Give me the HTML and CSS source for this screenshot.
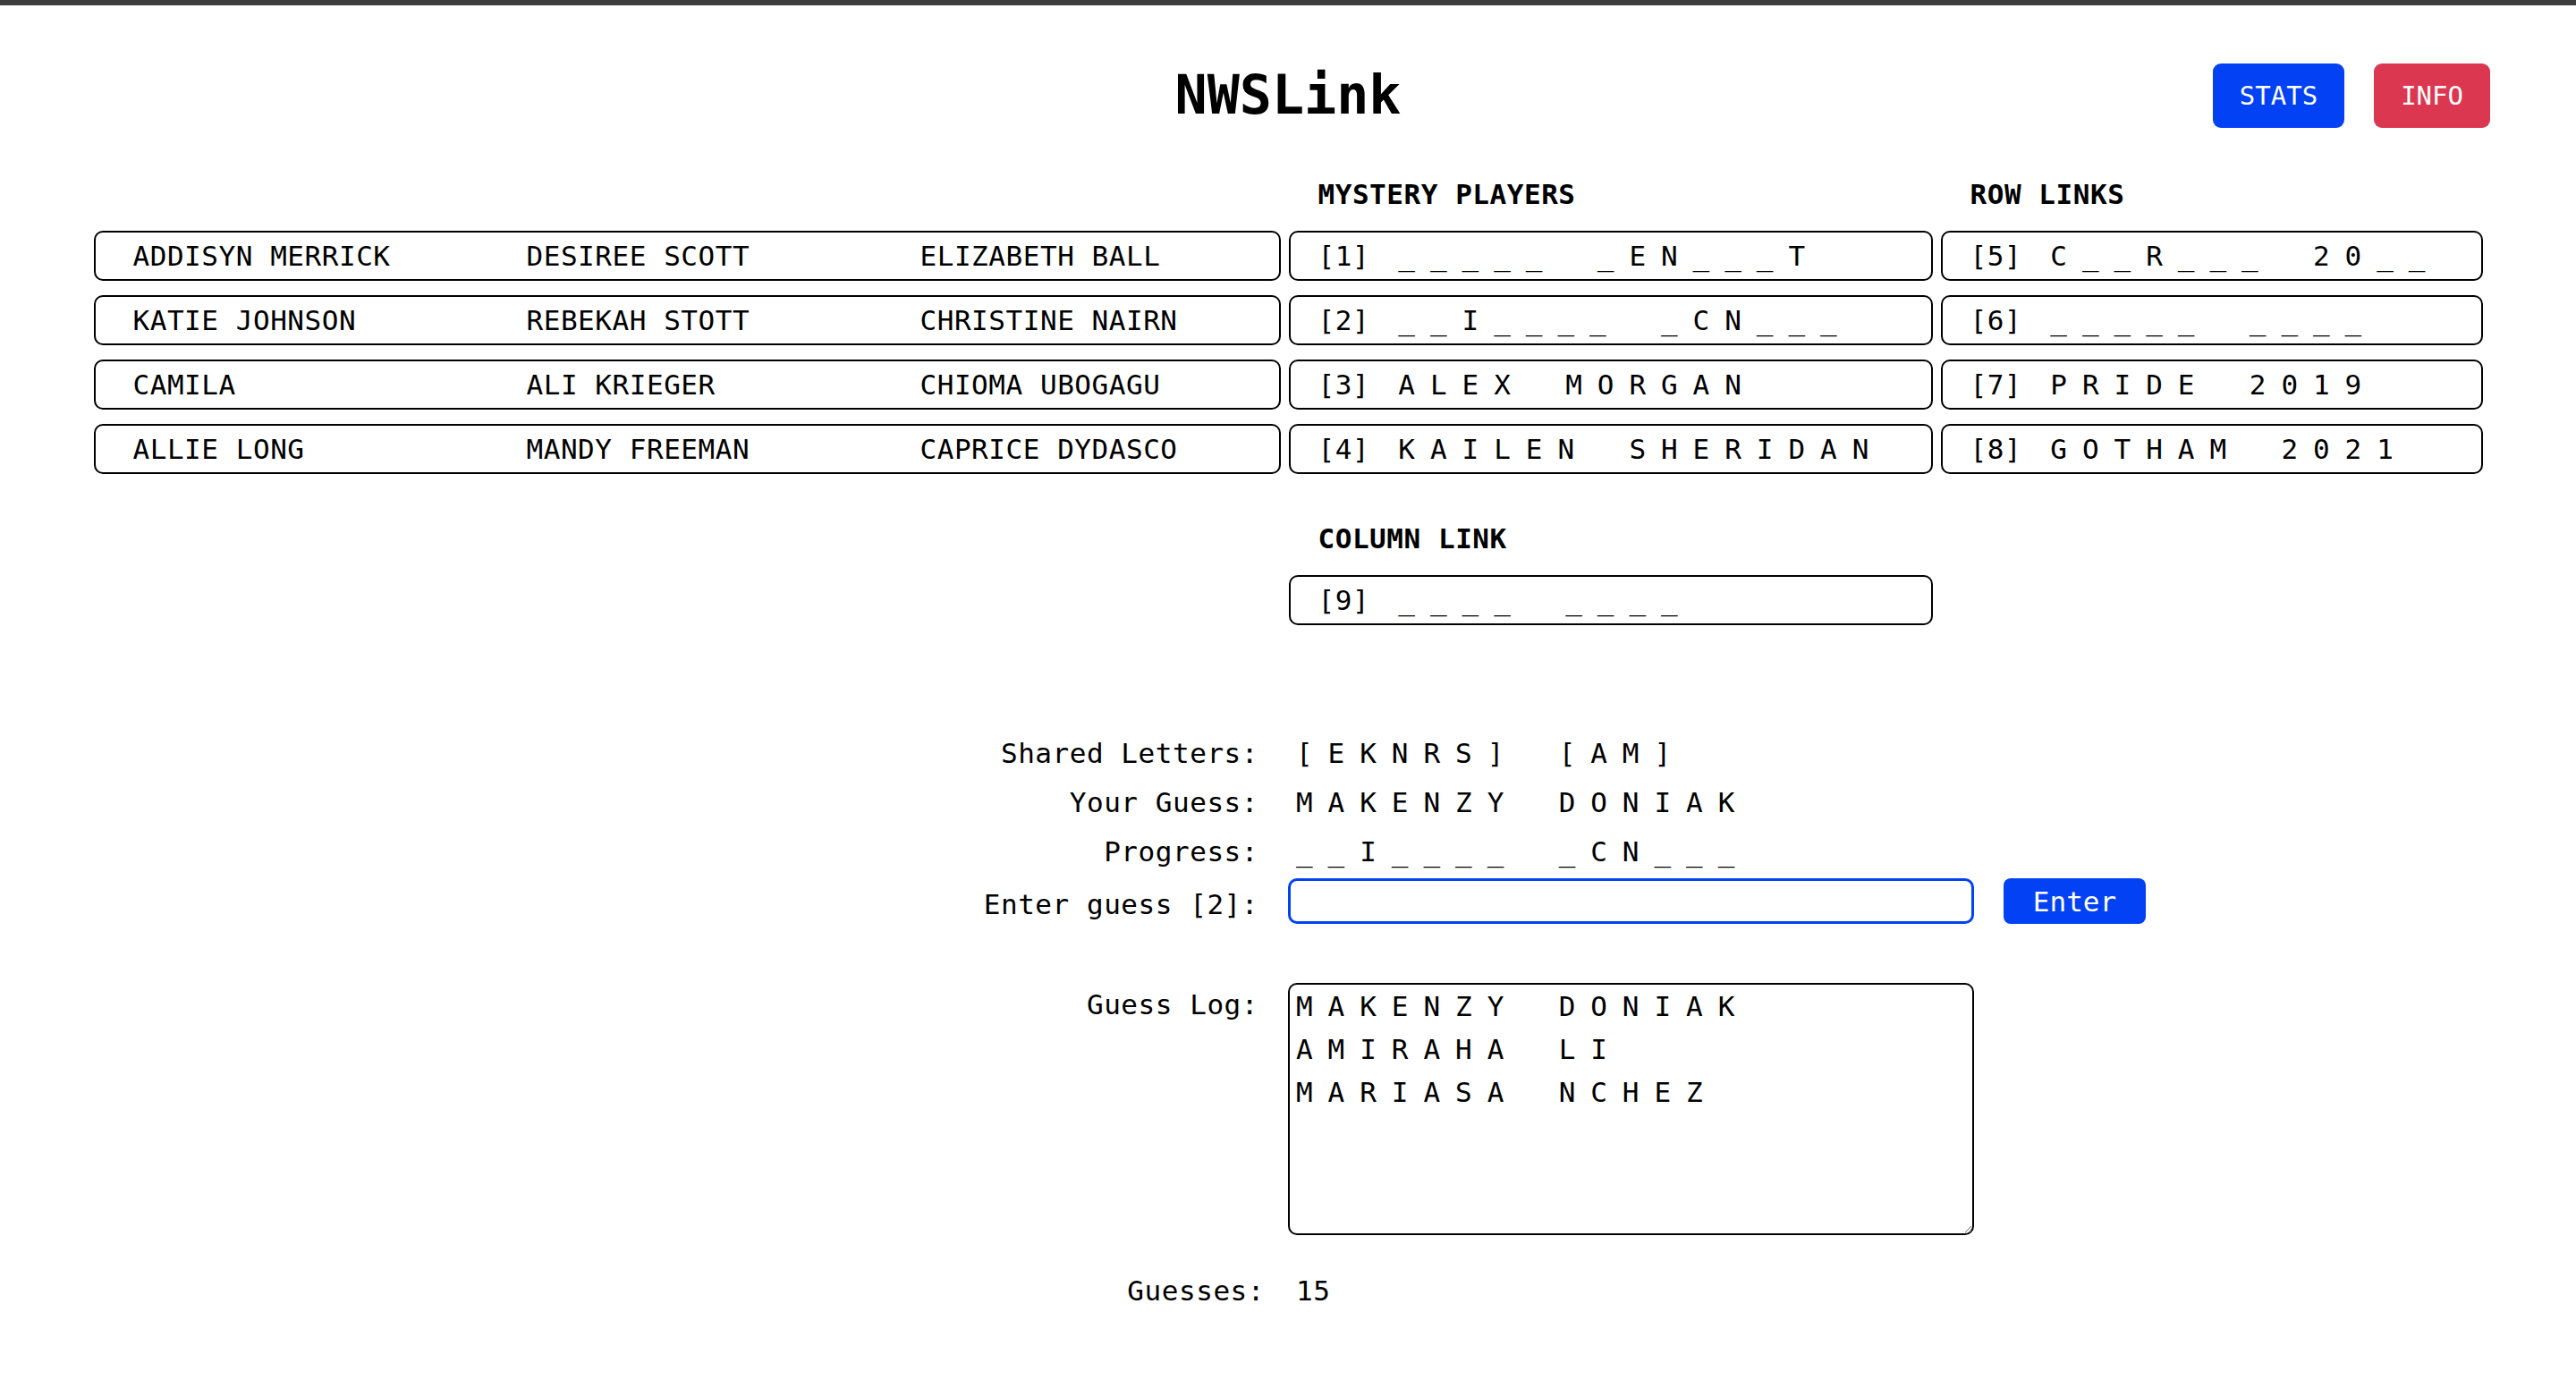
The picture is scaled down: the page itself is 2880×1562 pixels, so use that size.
FILE: index.html
```html
<!DOCTYPE html>
<html lang="en">
<head>
<meta charset="utf-8">
<title>NWSLink</title>
<link rel="stylesheet" href="styles.css">
</head>
<body>
<div class="topbar"></div>
<header class="header">
  <h1 class="title">NWSLink</h1>
  <nav class="actions">
    <button class="btn btn-top btn-stats">STATS</button>
    <button class="btn btn-top btn-info">INFO</button>
  </nav>
</header>
<main>
  <section class="board">
    <div class="col">
      <div class="heading"></div>
      <div class="box names"><span>ADDISYN MERRICK</span><span>DESIREE SCOTT</span><span>ELIZABETH BALL</span></div>
      <div class="box names"><span>KATIE JOHNSON</span><span>REBEKAH STOTT</span><span>CHRISTINE NAIRN</span></div>
      <div class="box names"><span>CAMILA</span><span>ALI KRIEGER</span><span>CHIOMA UBOGAGU</span></div>
      <div class="box names"><span>ALLIE LONG</span><span>MANDY FREEMAN</span><span>CAPRICE DYDASCO</span></div>
    </div>
    <div class="col">
      <h2 class="heading">MYSTERY PLAYERS</h2>
      <div class="box clue"><span class="num">[1]</span> <span class="sp">_ _ _ _ _   _ E N _ _ _ T</span></div>
      <div class="box clue"><span class="num">[2]</span> <span class="sp">_ _ I _ _ _ _   _ C N _ _ _</span></div>
      <div class="box clue"><span class="num">[3]</span> <span class="sp">A L E X   M O R G A N</span></div>
      <div class="box clue"><span class="num">[4]</span> <span class="sp">K A I L E N   S H E R I D A N</span></div>
      <h2 class="heading heading-col">COLUMN LINK</h2>
      <div class="box clue"><span class="num">[9]</span> <span class="sp">_ _ _ _   _ _ _ _</span></div>
    </div>
    <div class="col">
      <h2 class="heading">ROW LINKS</h2>
      <div class="box clue"><span class="num">[5]</span> <span class="sp">C _ _ R _ _ _   2 0 _ _</span></div>
      <div class="box clue"><span class="num">[6]</span> <span class="sp">_ _ _ _ _   _ _ _ _</span></div>
      <div class="box clue"><span class="num">[7]</span> <span class="sp">P R I D E   2 0 1 9</span></div>
      <div class="box clue"><span class="num">[8]</span> <span class="sp">G O T H A M   2 0 2 1</span></div>
    </div>
  </section>

  <section class="form">
    <div class="label">Shared Letters:</div>
    <div class="value sp">[ E K N R S ]   [ A M ]</div>
    <div class="label">Your Guess:</div>
    <div class="value sp">M A K E N Z Y   D O N I A K</div>
    <div class="label">Progress:</div>
    <div class="value sp">_ _ I _ _ _ _   _ C N _ _ _</div>
    <label class="label label-input" for="guess">Enter guess [2]:</label>
    <div class="input-row">
      <input id="guess" class="guess-input" type="text">
      <button class="btn btn-enter">Enter</button>
    </div>
    <div class="label label-log">Guess Log:</div>
    <textarea class="log" readonly>M A K E N Z Y   D O N I A K
A M I R A H A   L I
M A R I A S A   N C H E Z</textarea>
    <div class="label label-guesses">Guesses:</div>
    <div class="value value-guesses">15</div>
  </section>
</main>
</body>
</html>
```

FILE: styles.css
```css
* {
  box-sizing: border-box;
}

html,
body {
  margin: 0;
  padding: 0;
  background: #fff;
}

body {
  font-family: "DejaVu Sans Mono", "Liberation Mono", monospace;
  font-size: 31px;
  letter-spacing: 0.54px;
  color: #000;
}

.topbar {
  height: 6px;
  background: #3d3d3d;
}

/* header */
.header {
  display: grid;
  grid-template-columns: 1fr auto 1fr;
  align-items: center;
  height: 128px;
  margin-top: 37px;
}

.title {
  grid-column: 2;
  margin: 0;
  font-size: 60px;
  font-weight: bold;
  letter-spacing: 0;
  line-height: 1.164;
}

.actions {
  grid-column: 3;
  justify-self: end;
  display: flex;
  gap: 33px;
  padding-right: 96px;
}

.btn {
  font-family: inherit;
  border: 0;
  margin: 0;
  color: #fff;
  cursor: pointer;
}

.btn-top {
  height: 72px;
  padding: 0 30px;
  font-size: 29px;
  letter-spacing: 0;
  border-radius: 9px;
}

.btn-stats {
  background: #0341f5;
}

.btn-info {
  background: #dc3750;
}

/* board */
.board {
  display: grid;
  grid-template-columns: 1327px 720px 606px;
  column-gap: 9px;
  justify-content: center;
  margin-top: 27px;
}

.col {
  display: flex;
  flex-direction: column;
  gap: 16px;
}

.heading {
  height: 38px;
  line-height: 38px;
  margin: 0 0 6px;
  padding-left: 33px;
  font-size: 31px;
  font-weight: bold;
}

.heading-col {
  margin-top: 37px;
}

.box {
  height: 56px;
  border: 2px solid #000;
  border-radius: 10px;
  line-height: 52px;
  white-space: pre;
}

.names {
  display: grid;
  grid-template-columns: repeat(3, 440px);
  padding-left: 42px;
}

.clue {
  padding-left: 31px;
}

.num {
  margin-right: 13px;
}

.sp {
  letter-spacing: -5.26px;
  word-spacing: 8.8px;
  white-space: pre;
}

/* form */
.form {
  display: grid;
  grid-template-columns: 1fr 1440px;
  grid-template-rows: 55px 55px 55px 55px 346px 90px;
  column-gap: 33px;
  margin-top: 116px;
  align-items: start;
}

.label {
  text-align: right;
  line-height: 55px;
  white-space: pre;
}

.value {
  line-height: 55px;
  padding-left: 9px;
}

.label-input {
  padding-top: 4px;
}

.input-row {
  display: flex;
  gap: 33px;
  margin-top: 2px;
}

.guess-input {
  width: 767px;
  height: 51px;
  border: 3px solid #0341f5;
  border-radius: 10px;
  outline: none;
  padding: 0 8px;
  font-family: inherit;
  font-size: 31px;
  background: #fff;
}

.btn-enter {
  width: 159px;
  height: 51px;
  padding: 0;
  font-size: 31px;
  letter-spacing: 0;
  border-radius: 8px;
  background: #0341f5;
}

.label-log {
  margin-top: 64px;
  line-height: 48px;
}

.log {
  margin-top: 64px;
  width: 767px;
  height: 282px;
  border: 2px solid #000;
  border-radius: 10px;
  padding: 0 7px;
  font-family: inherit;
  font-size: 31px;
  line-height: 48px;
  letter-spacing: -5.26px;
  word-spacing: 8.8px;
  color: #000;
  background: #fff;
  outline: none;
  resize: both;
}

.label-guesses {
  margin-top: 35px;
  margin-right: -7px;
}

.value-guesses {
  margin-top: 35px;
}
```
